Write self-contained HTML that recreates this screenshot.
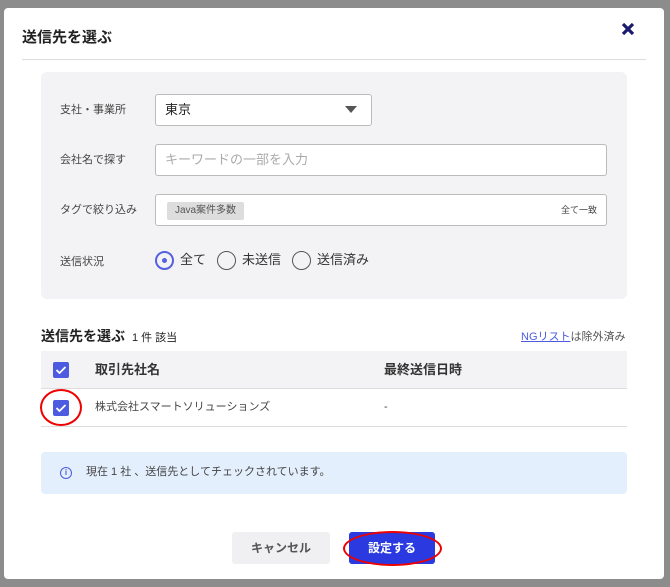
<!DOCTYPE html>
<html><head><meta charset="utf-8"><style>
*{box-sizing:border-box;margin:0;padding:0}
body{width:670px;height:587px;background:#8c8c8c;font-family:"Liberation Sans","Noto Sans CJK JP",sans-serif;position:relative;overflow:hidden;color:#333;line-height:1.15}
.modal{position:absolute;left:4px;top:8px;width:660px;height:571px;background:#fff;border-radius:4px}
.a{position:absolute}
.lbl{font-size:11px;color:#444;left:60px}
.box{position:absolute;background:#fff;border:1px solid #bbb;border-radius:3px}
.cb{position:absolute;width:16px;height:16px;background:#4d5be0;border-radius:2px}
.cb svg{position:absolute;left:2px;top:3px}
</style></head><body>
<div class="modal"></div>
<div class="a" style="left:22px;top:29px;font-size:15px;font-weight:bold;color:#222">送信先を選ぶ</div>
<svg class="a" style="left:621px;top:22px" width="14" height="14" viewBox="0 0 14 14"><path d="M2 2L12 12M12 2L2 12" stroke="#1a1a6e" stroke-width="3.2"/></svg>
<div class="a" style="left:22px;top:59px;width:624px;height:1px;background:#ddd"></div>
<div class="a" style="left:41px;top:72px;width:586px;height:227px;background:#f3f3f5;border-radius:6px"></div>
<div class="a lbl" style="top:104px">支社・事業所</div>
<div class="box" style="left:155px;top:94px;width:217px;height:32px"><span class="a" style="left:9px;top:8px;font-size:13px;color:#222">東京</span><svg class="a" style="left:189px;top:11px" width="12" height="8"><path d="M0 0H12L6 7Z" fill="#555"/></svg></div>
<div class="a lbl" style="top:154px">会社名で探す</div>
<div class="box" style="left:155px;top:144px;width:452px;height:32px"><span class="a" style="left:9px;top:8px;font-size:13px;color:#aaa">キーワードの一部を入力</span></div>
<div class="a lbl" style="top:204px">タグで絞り込み</div>
<div class="box" style="left:155px;top:194px;width:452px;height:32px"><span class="a" style="left:11px;top:7px;width:77px;height:18px;background:#ddd;border-radius:2px;font-size:10px;color:#555;text-align:center;line-height:18px">Java案件多数</span><span class="a" style="right:9px;top:10px;font-size:9px;color:#444">全て一致</span></div>
<div class="a lbl" style="top:256px">送信状況</div>
<div class="a" style="left:155px;top:251px;width:19px;height:19px;border:2px solid #5560e0;border-radius:50%"><div class="a" style="left:5px;top:5px;width:5px;height:5px;background:#5560e0;border-radius:50%"></div></div>
<div class="a" style="left:180px;top:253px;font-size:13px">全て</div>
<div class="a" style="left:217px;top:251px;width:19px;height:19px;border:1.5px solid #555;border-radius:50%"></div>
<div class="a" style="left:242px;top:253px;font-size:13px">未送信</div>
<div class="a" style="left:292px;top:251px;width:19px;height:19px;border:1.5px solid #555;border-radius:50%"></div>
<div class="a" style="left:317px;top:253px;font-size:13px">送信済み</div>
<div class="a" style="left:41px;top:328px;font-size:14px;font-weight:bold;color:#222">送信先を選ぶ <span style="font-size:11px;font-weight:normal">&nbsp;1 件 該当</span></div>
<div class="a" style="left:521px;top:331px;font-size:11px;color:#555"><span style="color:#4d5be0;text-decoration:underline">NGリスト</span>は除外済み</div>
<div class="a" style="left:41px;top:351px;width:586px;height:38px;background:#f3f3f5;border-bottom:1px solid #ddd"></div>
<div class="cb" style="left:53px;top:362px"><svg width="12" height="10"><path d="M1.5 5L4.5 8L10.5 2" stroke="#fff" stroke-width="1.8" fill="none"/></svg></div>
<div class="a" style="left:95px;top:363px;font-size:13px;font-weight:bold">取引先社名</div>
<div class="a" style="left:384px;top:363px;font-size:13px;font-weight:bold">最終送信日時</div>
<div class="a" style="left:41px;top:426px;width:586px;height:1px;background:#ddd"></div>
<div class="cb" style="left:53px;top:400px"><svg width="12" height="10"><path d="M1.5 5L4.5 8L10.5 2" stroke="#fff" stroke-width="1.8" fill="none"/></svg></div>
<div class="a" style="left:40px;top:389px;width:42px;height:37px;border:2.5px solid #e00;border-radius:50%"></div>
<div class="a" style="left:95px;top:401px;font-size:11px;color:#444">株式会社スマートソリューションズ</div>
<div class="a" style="left:384px;top:401px;font-size:11px;color:#444">-</div>
<div class="a" style="left:41px;top:452px;width:586px;height:42px;background:#e3effc;border-radius:4px"></div>
<div class="a" style="left:60px;top:467px;width:12px;height:12px;border:1.3px solid #4d5be0;border-radius:50%;font-size:8px;color:#4d5be0;text-align:center;line-height:10px;font-weight:bold">i</div>
<div class="a" style="left:86px;top:466px;font-size:11px;color:#444">現在 1 社 、送信先としてチェックされています。</div>
<div class="a" style="left:232px;top:532px;width:98px;height:32px;background:#f0f0f2;border-radius:3px;font-size:12px;font-weight:bold;color:#555;text-align:center;line-height:32px">キャンセル</div>
<div class="a" style="left:349px;top:532px;width:86px;height:32px;background:#2a3ae0;border-radius:3px;font-size:12px;font-weight:bold;color:#fff;text-align:center;line-height:32px">設定する</div>
<div class="a" style="left:343px;top:531px;width:99px;height:35px;border:2.5px solid #e00;border-radius:50%"></div>
</body></html>
